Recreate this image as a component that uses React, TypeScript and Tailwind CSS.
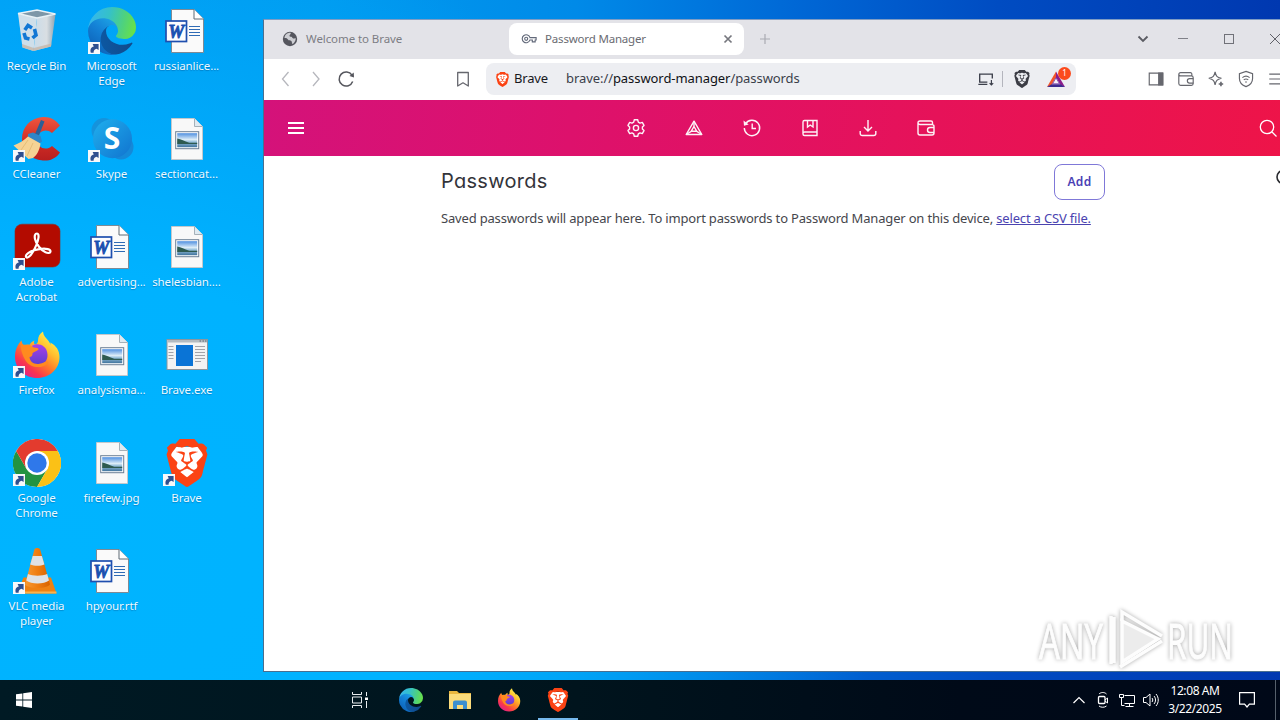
import type { ReactNode } from "react";
import { SiBrave } from "react-icons/si";

type DesktopEntry = {
  id: string;
  lines: string[];
  icon: ReactNode;
  shortcut?: boolean;
};

function ShortcutArrow() {
  return (
    <svg viewBox="0 0 12 12" className="absolute bottom-[1px] left-0 size-3">
      <rect width="12" height="12" fill="#f7f8fa" />
      <path d="M2.800 10.800C1.800 7 3.200 4.800 5.800 4.400L4.600 2h6v6L8.600 6.700C6.800 7 5.400 8.200 5.600 10.800z" fill="#2f4f8f" />
    </svg>
  );
}

function RecycleBinIcon() {
  return (
    <svg viewBox="0 0 48 48" className="size-12">
      <defs>
        <linearGradient id="bin" x1="0" x2="1">
          <stop offset="0" stopColor="#c9dcea" />
          <stop offset="0.6" stopColor="#d9dee2" />
          <stop offset="1" stopColor="#8fa3b1" />
        </linearGradient>
      </defs>
      <path d="M5 6.500 24 11 20.500 44 9.500 40.500z" fill="#cfdfea" />
      <path d="M24 11 42.500 7 38 39.500 20.500 44z" fill="url(#bin)" />
      <path d="M9 37 20.800 41 38.400 36.500 38 39.500 20.500 44 9.500 40.500z" fill="#c7b6a8" opacity=".8" />
      <path d="M5 6.500 24 3l18.500 4L24 11z" fill="#7d97a8" stroke="#e8f1f6" strokeWidth="1.3" />
      <g fill="none" stroke="#1277d4" strokeWidth="3.6">
        <path d="m11.800 23 3.200-4.500 4 2.500" />
        <path d="m21.500 22 1.500 6-3.500 3" />
        <path d="m16.500 32-4-1-1.500-5" />
      </g>
    </svg>
  );
}

function EdgeIcon({ className }: { className: string }) {
  return (
    <svg viewBox="0 0 256 256" className={className}>
      <defs>
        <linearGradient id="edge-a" x1="60" x2="240" y1="180" y2="180" gradientUnits="userSpaceOnUse">
          <stop offset="0" stopColor="#0c59a4" />
          <stop offset="1" stopColor="#114a8b" />
        </linearGradient>
        <linearGradient id="edge-b" x1="150" x2="40" y1="100" y2="240" gradientUnits="userSpaceOnUse">
          <stop offset="0" stopColor="#1b9de2" />
          <stop offset="0.4" stopColor="#1481d6" />
          <stop offset="1" stopColor="#0d62b8" />
        </linearGradient>
        <linearGradient id="edge-c" x1="10" x2="250" y1="60" y2="120" gradientUnits="userSpaceOnUse">
          <stop offset="0" stopColor="#35b6ee" />
          <stop offset="0.4" stopColor="#35c1c9" />
          <stop offset="0.75" stopColor="#4fd27c" />
          <stop offset="1" stopColor="#67e04b" />
        </linearGradient>
      </defs>
      <g transform="translate(-4.63 -4.92)">
        <path
          fill="url(#edge-a)"
          d="M235.680 195.460a93.730 93.730 0 0 1-10.540 4.710 101.870 101.870 0 0 1-35.900 6.460c-47.320 0-88.540-32.550-88.540-74.320A31.480 31.480 0 0 1 117.130 105c-42.800 1.800-53.800 46.400-53.800 72.530 0 73.880 68.090 81.370 82.760 81.370 7.910 0 19.840-2.300 27-4.560l1.310-.44a128.340 128.340 0 0 0 66.600-52.800 4 4 0 0 0-5.320-5.640z"
        />
        <path
          fill="url(#edge-b)"
          d="M110.340 246.340A79.200 79.200 0 0 1 87.600 225a80.720 80.720 0 0 1 29.530-120c3.120-1.470 8.450-4.130 15.540-4a32.350 32.350 0 0 1 25.690 13 31.880 31.880 0 0 1 6.360 18.660c0-.21 24.460-79.600-80-79.600-43.900 0-80 41.660-80 78.210a130.150 130.150 0 0 0 12.110 56 128 128 0 0 0 156.380 67.110 75.550 75.550 0 0 1-62.780-8z"
        />
        <path
          fill="url(#edge-c)"
          d="M156.940 153.780c-.81 1.050-3.300 2.500-3.300 5.660 0 2.610 1.700 5.120 4.720 7.230 14.380 10 41.490 8.680 41.560 8.680a59.560 59.560 0 0 0 30.270-8.350 61.380 61.380 0 0 0 30.430-52.880c.26-22.410-8-37.310-11.340-43.910C228.090 28.760 182.350 4.920 132.610 4.920a128 128 0 0 0-128 126.200c.48-36.540 36.800-66.050 80-66.050 3.500 0 23.460.34 42 10.070 16.340 8.580 24.900 18.940 30.850 29.210 6.180 10.670 7.280 24.150 7.280 29.520s-2.740 13.330-7.800 19.910z"
        />
      </g>
    </svg>
  );
}

function WordDocIcon() {
  return (
    <svg viewBox="0 0 48 48" className="size-12">
      <path d="M8.500 2.500h22.500l9.500 9.500v33.500h-32z" fill="#fafafa" stroke="#7f8a94" />
      <path d="M31 2.500V12h9.500" fill="#fff" stroke="#5f6a74" />
      <path d="M26 19.500h11M26 22.500h11M26 25.500h11M26 28.500h11" stroke="#2f6bb5" />
      <rect x="3" y="14" width="20.500" height="20.500" fill="#fdfdff" stroke="#1f4fae" strokeWidth="1.7" />
      <text
        x="13.2"
        y="30.5"
        textAnchor="middle"
        fontFamily="Liberation Serif, serif"
        fontSize="18"
        fontWeight="bold"
        fontStyle="italic"
        fill="#1b50b0"
        stroke="#1b50b0"
        strokeWidth="0.8"
      >
        W
      </text>
    </svg>
  );
}

function ImageFileIcon() {
  return (
    <svg viewBox="0 0 48 48" className="size-12">
      <defs>
        <linearGradient id="photo" x1="0" x2="0" y1="0" y2="1">
          <stop offset="0" stopColor="#4f8fe0" />
          <stop offset="0.45" stopColor="#dcecf7" />
          <stop offset="0.6" stopColor="#9cc3dd" />
          <stop offset="1" stopColor="#3f739d" />
        </linearGradient>
      </defs>
      <path d="M8.500 3.500h23l8 8v33h-31z" fill="#f8f8f8" stroke="#c3c8cc" />
      <path d="M31.500 3.500v8h8" fill="#dfeaf1" stroke="#a5b0b8" />
      <rect x="12.700" y="16.700" width="23" height="17" fill="#fff" stroke="#6b7f95" />
      <rect x="14.200" y="18.200" width="20" height="14" fill="url(#photo)" />
      <path d="M14.200 23.500c4 .5 7 2.500 12 4.200h8v1.300h-20z" fill="#2e5a50" />
    </svg>
  );
}

function CCleanerIcon() {
  return (
    <svg viewBox="0 0 48 48" className="size-12">
      <defs>
        <linearGradient id="cc" x1="0" x2="0" y1="0" y2="1">
          <stop offset="0" stopColor="#f0563f" />
          <stop offset="0.5" stopColor="#d22f26" />
          <stop offset="1" stopColor="#b81f1f" />
        </linearGradient>
      </defs>
      <path
        d="M47 10.500 39 18c-6-5.500-15-1.500-15 6.500s8.500 12 15 6.500L47 37.500C42 44.500 36 46 30 45.500 16.500 44.500 9 35.500 9 24S17 3 30 2c7-.4 13 3 17 8.500z"
        fill="url(#cc)"
      />
      <path d="m28 5 3.500 1.500L24.500 24l-4-1.500z" fill="#2c5f96" />
      <path d="m15 19 5-1.500 7.500 3.500 1.500 5.500-3 2-11-6z" fill="#2f86c9" />
      <path d="M15 21.500c-4 4-9 7-14.500 9L15.500 44l4.500-1c4-3 6.500-7.500 7.500-14.500z" fill="#f5d394" />
      <path d="M15 25 8 35m12-7-6 13" stroke="#e6bd77" fill="none" />
    </svg>
  );
}

function SkypeIcon() {
  return (
    <svg viewBox="0 0 48 48" className="size-12">
      <defs>
        <linearGradient id="skype" x1="0" x2="1" y1="0" y2="1">
          <stop offset="0" stopColor="#1fb0ee" />
          <stop offset="1" stopColor="#1173cf" />
        </linearGradient>
      </defs>
      <circle cx="16" cy="15.500" r="12.500" fill="#1593dc" />
      <circle cx="33" cy="32" r="12.500" fill="#1589d8" />
      <circle cx="24.500" cy="23.700" r="19.500" fill="url(#skype)" />
      <text
        x="24"
        y="34"
        textAnchor="middle"
        fontFamily="Open Sans, sans-serif"
        fontSize="30"
        fontWeight="bold"
        fill="#fff"
      >
        S
      </text>
    </svg>
  );
}

function AcrobatIcon() {
  return (
    <svg viewBox="0 0 48 48" className="size-12">
      <rect x="2" y="1.200" width="45" height="42.800" rx="7" fill="#b30b00" stroke="#8f2a20" strokeWidth=".6" />
      <path
        d="M24 10.500c-2.200 0-2.600 2.600-2 5.500 1 5 6 11.200 10.500 13.300 2.500 1.100 5 .9 5-.9 0-2.300-4.500-2.900-8.500-2.600-5 .4-10 1.700-13.500 4-2 1.300-3.200 3.100-2.300 4.300 1.200 1.500 4.200-1 6.300-4.600 2.800-4.700 5.500-10.500 6-15 .2-2.300-.2-4-1.500-4z"
        fill="none"
        stroke="#fff"
        strokeWidth="2.2"
      />
    </svg>
  );
}

function FirefoxIcon({ className }: { className: string }) {
  return (
    <svg viewBox="0 0 48 48" className={className}>
      <defs>
        <linearGradient id="ff-a" x1="0.85" x2="0.2" y1="0.1" y2="0.95">
          <stop offset="0" stopColor="#fff34d" />
          <stop offset="0.3" stopColor="#ffbd2e" />
          <stop offset="0.55" stopColor="#ff7a2a" />
          <stop offset="0.8" stopColor="#f9354f" />
          <stop offset="1" stopColor="#e0228a" />
        </linearGradient>
        <linearGradient id="ff-b" x1="0" x2="0" y1="0" y2="1">
          <stop offset="0" stopColor="#a83fe8" />
          <stop offset="1" stopColor="#5b3fd0" />
        </linearGradient>
      </defs>
      <path
        d="M8.500 9.500c.3 2 .8 3.200 2 4.500 2-.6 4-.7 6-.3 1.500-2.200 3-3.400 5-4.200-.7 1.500-.6 2.700 0 3.800 2.500 0 3.500-1.500 3.500-4 0-3.700 1.800-6.500 5-8.800.3 4 2.500 6 4.500 8.200 1.600 1.800 2.500 3.200 3 5.300 0-1 0-1.700-.2-2.600C43 14.500 46.500 19 46.500 26c0 12.200-10 21-22.300 21S2 37.800 2 26c0-7 2.500-12.500 6.500-16.500z"
        fill="url(#ff-a)"
      />
      <path d="M19 15c4-3.500 15-2 15.500 8.500.3 7-4.500 10.500-10 10.500S15 31 14.500 26c2-4 5-4 7-6z" fill="url(#ff-b)" />
      <path
        d="M7.500 12c2 2.500 5 1.700 9 2 1.500.7 3 2.200 4.500 2.600 3 .4 4.500.5 4.500 1.500-.2 1.900-5 2.600-6 4.200.3 2.200-1 3.700-3 3.700.5 5.200 5 7.700 10 6.800 3.500-.6 5-2.300 7.500-2.300 1.500 0 1.700 1.600.5 2.500-6 4.600-17 4.600-22-3.500-3.500-5.700-5-11.500-5-17.500z"
        fill="#ff8a1f"
      />
    </svg>
  );
}

function ChromeIcon() {
  return (
    <svg viewBox="0 0 48 48" className="size-12">
      <circle cx="24" cy="24" r="24" fill="#fff" />
      <path d="M3.200 12A24 24 0 0 0 24 48l10.400-18L24 34.500 13.600 30z" fill="#229342" />
      <path d="M44.800 12A24 24 0 0 1 24 48l10.400-18L36 24l-4-9-8-3z" fill="#fbc116" />
      <path d="M3.200 12A24 24 0 0 1 44.800 12H24L13.600 30z" fill="#e33b2e" />
      <circle cx="24" cy="24" r="12" fill="#fff" />
      <circle cx="24" cy="24" r="9.700" fill="#2f78ea" />
    </svg>
  );
}

function VlcIcon() {
  return (
    <svg viewBox="0 0 48 48" className="size-12">
      <defs>
        <linearGradient id="cone" x1="0" x2="1">
          <stop offset="0" stopColor="#f79a33" />
          <stop offset="0.5" stopColor="#ef7d10" />
          <stop offset="1" stopColor="#d76300" />
        </linearGradient>
      </defs>
      <path d="M10.500 30.500h27.500l5.500 16H4z" fill="#ef8112" />
      <path d="M4 44.500h39.500v2H4z" fill="#fbb34d" />
      <path d="M21.500 2c1-1.500 4.500-1.500 5.500 0l10 35.500C34 42 15 42 12 37.500z" fill="url(#cone)" />
      <path d="M19.700 9h9.200l2.500 8.500c-4 1.800-10 1.800-14.200 0z" fill="#dfe2e5" />
      <path d="M15 27c5 2.300 14 2.300 19.200 0l1.800 6.500c-5 4-18 4-22.700 0z" fill="#dfe2e5" />
    </svg>
  );
}

function BraveExeIcon() {
  return (
    <svg viewBox="0 0 48 48" className="size-12">
      <rect x="4" y="8.500" width="40.500" height="30" fill="#f3f3f3" stroke="#8c969e" />
      <rect x="4.500" y="9" width="39.500" height="2.500" fill="#b4bbc1" />
      <path d="M36.500 10h1.500m1.500 0h1.500m1 0h1.500" stroke="#5f6972" />
      <rect x="13" y="14" width="17" height="21" fill="#0a74d6" />
      <path
        d="M5.500 15.500h5M5.500 18.500h5M5.500 21.500h5M5.500 24.500h5M5.500 27.500h5M32 15.500h10M32 18.500h10M32 21.500h10M32 24.500h10M32 27.500h10M32 30.500h6"
        stroke="#a3a3a9"
      />
    </svg>
  );
}

function BraveShield({ size }: { size: number }) {
  return (
    <span className="relative inline-flex items-center justify-center text-[#fb4314]">
      <svg viewBox="0 0 24 24" width={size} height={size} className="absolute">
        <path d="M5 4h14l2 4-4 11-5 4-5-4L3 8z" fill="#fff" />
      </svg>
      <SiBrave size={size} className="relative" />
    </span>
  );
}

const DESKTOP: DesktopEntry[] = [
  { id: "bin", lines: ["Recycle Bin"], icon: <RecycleBinIcon /> },
  { id: "cc", lines: ["CCleaner"], icon: <CCleanerIcon />, shortcut: true },
  { id: "acrobat", lines: ["Adobe", "Acrobat"], icon: <AcrobatIcon />, shortcut: true },
  { id: "firefox", lines: ["Firefox"], icon: <FirefoxIcon className="size-12" />, shortcut: true },
  { id: "chrome", lines: ["Google", "Chrome"], icon: <ChromeIcon />, shortcut: true },
  { id: "vlc", lines: ["VLC media", "player"], icon: <VlcIcon />, shortcut: true },
  { id: "edge", lines: ["Microsoft", "Edge"], icon: <EdgeIcon className="size-12" />, shortcut: true },
  { id: "skype", lines: ["Skype"], icon: <SkypeIcon />, shortcut: true },
  { id: "advertising", lines: ["advertising..."], icon: <WordDocIcon /> },
  { id: "analysisma", lines: ["analysisma..."], icon: <ImageFileIcon /> },
  { id: "firefew", lines: ["firefew.jpg"], icon: <ImageFileIcon /> },
  { id: "hpyour", lines: ["hpyour.rtf"], icon: <WordDocIcon /> },
  { id: "russianlice", lines: ["russianlice..."], icon: <WordDocIcon /> },
  { id: "sectioncat", lines: ["sectioncat..."], icon: <ImageFileIcon /> },
  { id: "shelesbian", lines: ["shelesbian...."], icon: <ImageFileIcon /> },
  { id: "braveexe", lines: ["Brave.exe"], icon: <BraveExeIcon /> },
  { id: "brave", lines: ["Brave"], icon: <BraveShield size={48} />, shortcut: true },
];

function DesktopIcons() {
  return (
    <div className="grid w-[263px] shrink-0 auto-cols-[75px] grid-flow-col grid-rows-[repeat(6,108px)] content-start">
      {DESKTOP.map((d) => (
        <div key={d.id} className="flex flex-col pt-[7px]">
          <div className="relative ml-[13px] size-12">
            {d.icon}
            {d.shortcut && <ShortcutArrow />}
          </div>
          <div className="mt-[3px] w-[73px] text-center text-[11.5px] leading-[15px] tracking-[-0.1px] whitespace-nowrap text-white/95 [text-shadow:0_1px_1px_rgba(0,40,90,0.3)]">
            {d.lines.map((line) => (
              <div key={line}>{line}</div>
            ))}
          </div>
        </div>
      ))}
    </div>
  );
}

type GlyphProps = { children: ReactNode; className?: string; size?: number };

function Glyph({ children, className, size = 20 }: GlyphProps) {
  return (
    <svg
      viewBox="0 0 20 20"
      width={size}
      height={size}
      fill="none"
      stroke="currentColor"
      strokeWidth="1.3"
      className={className}
    >
      {children}
    </svg>
  );
}

function WalletGlyph() {
  return (
    <>
      <path d="M16.500 6.500v-2a1.500 1.500 0 0 0-1.500-1.500H4a2 2 0 0 0-2 2v10a2 2 0 0 0 2 2h12a2 2 0 0 0 2-2V8.500a2 2 0 0 0-2-2H4a2 2 0 0 1-2-1.500" />
      <path d="M18 9.500h-4a2.500 2.500 0 0 0 0 5h4" />
    </>
  );
}

function TabStrip() {
  return (
    <div className="flex h-[39px] items-center bg-[#e3e3e8] pb-[2px] text-[#6a6b72]">
      <div className="flex h-8 w-[245px] items-center gap-2 pl-[18px] text-[11.5px]">
        <svg viewBox="0 0 16 16" className="size-4">
          <circle cx="8" cy="8" r="7.200" fill="#55565e" />
          <path
            d="M8.500 1.800c1 1-.5 1.700-1 2.700-.5.900.8 1.300 1.800 1.300s.7 1.500 1.900 1.600c1.200 0 1.800-.6 2.600 0-.2 2.500-1.500 4.600-3.300 5.600-1-.6-.2-2.300-1.200-3-1-.8-2.800-.2-3.300-1.500-.6-1.300-2-1.800-3.500-1.500C2.600 4 5 1.700 8.500 1.800z"
            fill="#e3e3e8"
            opacity=".85"
          />
        </svg>
        <span className="tracking-[-0.08px] text-[#7c7d84]">Welcome to Brave</span>
      </div>
      <div className="flex h-8 w-[235px] items-center rounded-[8px] bg-white pl-3 text-[11.5px]">
        <svg viewBox="0 0 18 12" className="h-3 w-[17px]" fill="none" stroke="#62697a" strokeWidth="1.2">
          <path d="M9.500 4.500h6.500v2.500h-1v2h-3v-2H9.500A4.200 4.200 0 1 1 9.500 4.500z" />
          <circle cx="5.500" cy="5.800" r="1.600" />
        </svg>
        <span className="ml-[7px] tracking-[-0.18px]">Password Manager</span>
        <svg viewBox="0 0 10 10" className="mr-[11px] ml-auto size-[10px]" stroke="#76777e" strokeWidth="1.7">
          <path d="m1.500 1.500 7 7m0-7-7 7" />
        </svg>
      </div>
      <svg viewBox="0 0 10 10" className="ml-4 size-[10px]" stroke="#aaabb2" strokeWidth="1.2">
        <path d="M5 0v10M0 5h10" />
      </svg>
      <div className="ml-[367px] flex items-center">
        <svg viewBox="0 0 12 8" className="h-2 w-3" fill="none" stroke="#5a5b62" strokeWidth="1.8">
          <path d="m1.500 1.500 4.500 4.500 4.500-4.500" />
        </svg>
        <div className="ml-[29px] h-px w-[10px] bg-[#808188]" />
        <div className="ml-[36px] size-[10px] border border-[#707178]" />
        <svg viewBox="0 0 10 10" className="ml-[36px] size-[10px]" stroke="#606168">
          <path d="m0 0 10 10M10 0 0 10" />
        </svg>
      </div>
    </div>
  );
}

function ToolButton({ children }: { children: ReactNode }) {
  return <div className="flex w-[30px] shrink-0 items-center justify-center">{children}</div>;
}

function Toolbar() {
  return (
    <div className="flex h-[41px] items-stretch bg-white pt-[4px] pb-[5px] pl-[7px] text-[#66676e]">
      <ToolButton>
        <Glyph className="text-[#b6b7bd]">
          <path d="m12.500 3-6 7 6 7" />
        </Glyph>
      </ToolButton>
      <ToolButton>
        <Glyph className="text-[#b6b7bd]">
          <path d="m7 3 6 7-6 7" />
        </Glyph>
      </ToolButton>
      <ToolButton>
        <Glyph className="text-[#55565d]">
          <path strokeWidth="1.5" d="M16.700 12.500A7 7 0 1 1 16 6.200" />
          <path d="m17.700 3.500.3 5-4.500-1.500z" fill="currentColor" stroke="none" />
        </Glyph>
      </ToolButton>
      <div className="w-[87px] shrink-0" />
      <ToolButton>
        <Glyph>
          <path strokeWidth="1.3" d="M4.700 3.500h10.600v13.500L10 13.800 4.700 17z" strokeLinejoin="round" />
        </Glyph>
      </ToolButton>
      <div className="ml-2 flex w-[590px] shrink-0 items-center rounded-[8px] bg-[#edeef2] pl-2 text-[13px] text-[#3b3e4a]">
        <span className="flex size-4 items-center justify-center">
          <BraveShield size={15} />
        </span>
        <span className="ml-[4px] w-[52px] tracking-[-0.2px] whitespace-nowrap text-[#17181d]">Brave</span>
        <span className="tracking-[-0.07px] whitespace-nowrap">
          brave://<span className="text-[#101116]">password-manager</span>/passwords
        </span>
        <div className="ml-auto flex items-center">
          <Glyph size={18} className="mr-px text-[#3b3e4a]">
            <path strokeWidth="1.5" d="M11.500 13.500H3V4.500h14v5M1.500 16h10" />
            <path strokeWidth="1.3" d="M16 11v5.500m-2-2 2 2 2-2" />
          </Glyph>
          <div className="ml-[6px] h-4 w-px bg-[#b4b5bd]" />
          <SiBrave size={18} className="ml-[10px] text-[#3b3c44]" />
          <div className="relative mr-[11px] ml-4">
            <svg viewBox="0 0 18 17" className="h-[17px] w-[18px]">
              <path d="M9 .5 0 16l4.500-2L9 6.200z" fill="#f2552c" />
              <path d="M9 .5 18 16l-4.500-2L9 6.200z" fill="#8c1d8c" />
              <path d="M0 16h18l-4.500-2.800h-9z" fill="#3d2a8f" />
              <path d="M9 6.800 5.500 12.800h7z" fill="#f6f0f6" stroke="#6c2aa0" strokeWidth=".8" />
            </svg>
            <span className="absolute top-[-4px] right-[-6px] flex size-[13px] items-center justify-center rounded-full bg-[#fb4a1c] text-[8px] leading-none text-white">
              1
            </span>
          </div>
        </div>
      </div>
      <div className="w-[65px] shrink-0" />
      <ToolButton>
        <Glyph size={18}>
          <path d="M2.500 3.500h15v13h-15z" />
          <path d="M13 3.500h4.500v13H13z" fill="currentColor" />
        </Glyph>
      </ToolButton>
      <ToolButton>
        <Glyph size={18}>
          <WalletGlyph />
        </Glyph>
      </ToolButton>
      <ToolButton>
        <Glyph size={18}>
          <path d="M9 2c1 5 2 6 7 7.200-5 1.300-6 2.300-7 7.300-1-5-2-6-7-7.300C7 8 8 7 9 2z" />
          <path d="M15.500 13v5M13 15.500h5" strokeWidth="1.8" />
        </Glyph>
      </ToolButton>
      <ToolButton>
        <Glyph size={18}>
          <path d="m10 1.500 7.300 2.700v5.300c0 4.500-3 7.500-7.300 9-4.300-1.500-7.300-4.500-7.300-9V4.200z" />
          <path d="M6 8.500c2.500-2 5.500-2 8 0M7.500 11c1.500-1.200 3.500-1.200 5 0M9 13.300h2" />
        </Glyph>
      </ToolButton>
      <ToolButton>
        <Glyph size={18}>
          <path d="M2.500 4.500h14M2.500 10h14M2.500 15.500h14" />
        </Glyph>
      </ToolButton>
    </div>
  );
}

const NAV_GLYPHS: { id: string; glyph: ReactNode }[] = [
  {
    id: "settings",
    glyph: (
      <>
        <path
          strokeLinejoin="round"
          d="M8.300 1.800h3.400l.6 2.300 1.700 1 2.300-.7 1.700 3-1.600 1.600v2l1.600 1.600-1.700 3-2.300-.7-1.700 1-.6 2.300H8.300l-.6-2.300-1.700-1-2.300.7-1.700-3L3.600 11V9L2 7.400l1.700-3 2.300.7 1.700-1z"
        />
        <circle cx="10" cy="10" r="2.600" />
      </>
    ),
  },
  {
    id: "rewards",
    glyph: (
      <>
        <path d="m10 3.200 7.800 13.300H2.200z" strokeLinejoin="round" />
        <path d="m10 8.500 2.800 4.800H7.200zM10 3.200v5.300M2.200 16.500l5-3.200m10.600 3.200-5-3.200" />
      </>
    ),
  },
  {
    id: "history",
    glyph: (
      <>
        <path d="M3.500 5.800A7.700 7.700 0 1 1 2.300 10" />
        <path d="M10.200 5.500v5h3.800" />
        <path d="m1.500 2.500.5 5.200 4.700-1.200z" fill="currentColor" stroke="none" />
      </>
    ),
  },
  {
    id: "bookmarks",
    glyph: (
      <>
        <path d="M17 14V2.500H4.500a1.500 1.500 0 0 0-1.500 1.500v12a1.500 1.500 0 0 0 1.500 1.500H17V14H4.500A1.500 1.500 0 0 0 3 15.500" />
        <path d="M7.500 2.500V9l2.700-2L13 9V2.500" />
      </>
    ),
  },
  {
    id: "downloads",
    glyph: (
      <>
        <path d="M10 2v11m-4-4 4 4 4-4" />
        <path d="M2.200 13v2.500a2 2 0 0 0 2 2h11.600a2 2 0 0 0 2-2V13" />
      </>
    ),
  },
  { id: "wallet", glyph: <WalletGlyph /> },
];

function HeaderBar() {
  return (
    <div className="flex h-14 items-center bg-[linear-gradient(98deg,#d4127a_0%,#dd116c_30%,#e61259_65%,#ee1448_100%)] text-white">
      <div className="ml-6 flex w-4 flex-col gap-[3px]">
        <div className="h-[2px] bg-white" />
        <div className="h-[2px] bg-white" />
        <div className="h-[2px] bg-white" />
      </div>
      <div className="ml-[322px] flex gap-[38px]">
        {NAV_GLYPHS.map((n) => (
          <Glyph key={n.id} className="opacity-95 [stroke-width:1.4]">
            {n.glyph}
          </Glyph>
        ))}
      </div>
      <Glyph className="ml-[322px]">
        <circle cx="9" cy="9" r="6.700" />
        <path d="m14 14 4.500 4.500" />
      </Glyph>
    </div>
  );
}

function PasswordsPage() {
  return (
    <div className="flex flex-1 bg-white pl-[177px] text-[#45464c]">
      <div className="w-[664px] shrink-0 pt-2">
        <div className="flex h-9 items-center justify-between">
          <h1 className="pb-[3px] font-[Inter,sans-serif] text-[20px] tracking-[0.3px] text-[#33343a] [font-feature-settings:'cv11']">
            Passwords
          </h1>
          <button className="h-9 w-[51px] rounded-[8px] border border-[#7f78d8] text-[12px] font-semibold tracking-[0.3px] text-[#4a3fb5]">
            Add
          </button>
        </div>
        <p className="mt-[9px] text-[13px] leading-[18px] tracking-[-0.177px] whitespace-nowrap">
          Saved passwords will appear here. To import passwords to Password Manager on this device,{" "}
          <a className="text-[#4a43b0] underline">select a CSV file.</a>
        </p>
      </div>
      <svg viewBox="0 0 16 16" className="mt-[13px] ml-[170px] size-4 shrink-0" fill="none" stroke="#2a2b30" strokeWidth="1.6">
        <circle cx="8.500" cy="8" r="6.500" />
      </svg>
    </div>
  );
}

function BrowserWindow() {
  return (
    <div className="mt-[19px] flex h-[653px] w-[1017px] shrink-0 flex-col overflow-hidden border-y border-l border-[#4a6f8f] border-t-[#7f9cc4]">
      <div className="flex w-[1030px] flex-1 flex-col">
        <TabStrip />
        <Toolbar />
        <HeaderBar />
        <PasswordsPage />
      </div>
    </div>
  );
}

function Watermark() {
  return (
    <svg
      viewBox="0 0 200 66"
      className="absolute top-[607px] left-[1036px] h-[66px] w-[200px] overflow-visible drop-shadow-[0_0_2px_rgba(0,0,0,0.35)]"
      fill="#fdfdfd"
      stroke="#fdfdfd"
      fontFamily="Open Sans, sans-serif"
      fontSize="50"
    >
      <text x="3" y="52" textLength="64" lengthAdjust="spacingAndGlyphs">
        ANY
      </text>
      <text x="131" y="52" textLength="66" lengthAdjust="spacingAndGlyphs">
        RUN
      </text>
      <g fill="none" strokeWidth="3.5">
        <path d="M86 14v41l36-23z" fill="#ececec" />
        <path d="M75 57V9m3 47V10M86 14V5l40 24M84 60l42-26" />
      </g>
    </svg>
  );
}

function TaskbarSlot({ children }: { children: ReactNode }) {
  return <div className="relative flex w-[49px] items-center justify-center">{children}</div>;
}

function Taskbar() {
  return (
    <div className="flex h-10 items-stretch bg-[linear-gradient(90deg,#001a24_0%,#00141d_45%,#000a18_75%,#000818_100%)] text-white">
      <div className="flex w-12 items-center justify-center">
        <svg viewBox="0 0 16 16" className="size-4" fill="#fff">
          <path d="M0 2.300 6.400 1.400v6.200H0zM7.200 1.300 16 0v7.600H7.200zM0 8.400h6.400v6.200L0 13.700zM7.200 8.400H16V16l-8.800-1.300z" />
        </svg>
      </div>
      <div className="ml-[287px] flex w-[51px] items-center justify-center pr-[2px]">
        <svg viewBox="0 0 18 16" className="h-4 w-[18px]" fill="none" stroke="#e8edf0">
          <path d="M1.500 0v2.500h9V0M1.500 16v-2.500h9V16M1.500 5h9v6h-9zM15.500 0v4M15.500 9v7" />
          <path d="M14 5.500h3v2.500h-3z" fill="#fff" stroke="none" />
        </svg>
      </div>
      <TaskbarSlot>
        <EdgeIcon className="size-6" />
      </TaskbarSlot>
      <TaskbarSlot>
        <svg viewBox="0 0 22 20" className="h-5 w-[22px]">
          <path d="M0 1h8l2 2h12v16H0z" fill="#e9b73f" />
          <path d="M0 4h22v15H0z" fill="#fbdc7b" />
          <path d="M4 12.500a2 2 0 0 1 2-2h10a2 2 0 0 1 2 2V19h-4v-4H8v4H4z" fill="#3b8fd0" />
        </svg>
      </TaskbarSlot>
      <TaskbarSlot>
        <FirefoxIcon className="size-6" />
      </TaskbarSlot>
      <TaskbarSlot>
        <BraveShield size={24} />
        <div className="absolute bottom-0 left-[5px] h-[2px] w-10 bg-[#76b9ed]" />
      </TaskbarSlot>
      <div className="ml-[485px] flex items-center">
        <div className="flex w-6 justify-center">
          <svg viewBox="0 0 12 8" className="h-2 w-3" fill="none" stroke="#fff" strokeWidth="1.2">
            <path d="m.5 7 5.500-5.500L11.500 7" />
          </svg>
        </div>
        <div className="flex w-6 justify-center">
          <svg viewBox="0 0 16 16" className="size-4" fill="none" stroke="#fff">
            <rect x="3.500" y="4.500" width="6.500" height="7" rx="1" strokeWidth="1.3" />
            <path d="m10 8 2.500-2v5L10 9M4 2C6 0 9.500 0 11.500 2M4 14c2 1.700 5.500 1.700 7.500 0" />
          </svg>
        </div>
        <div className="flex w-6 justify-center">
          <svg viewBox="0 0 16 16" className="size-4" fill="none" stroke="#fff">
            <path d="M5.500 3.500h10v8h-10M10.500 11.500v3M6.500 14.500h8M.5 2.500h4v3h-4zM2.500 5.500v8h3" />
          </svg>
        </div>
        <div className="flex w-6 justify-center">
          <svg viewBox="0 0 16 16" className="size-4" fill="none" stroke="#fff">
            <path d="M.5 5.500h2.500l4-3.500v12L3 10.500H.5zM9 6c1 1.200 1 2.800 0 4M11 4c2 2.300 2 5.700 0 8M13 2c3 3.500 3 8.500 0 12" />
          </svg>
        </div>
      </div>
      <div className="flex w-16 flex-col items-center justify-center text-[12px] leading-[18px] tracking-[-0.4px] whitespace-nowrap">
        <span>12:08 AM</span>
        <span>3/22/2025</span>
      </div>
      <div className="flex w-10 items-center justify-center">
        <svg viewBox="0 0 16 16" className="size-4" fill="none" stroke="#fff" strokeWidth="1.2">
          <path d="M.6.600h14.800v11.500h-5L8 15l-2.400-2.900h-5z" />
        </svg>
      </div>
      <div className="ml-2 w-px bg-[#56606c]" />
    </div>
  );
}

export default function App() {
  return (
    <div className="relative flex h-[720px] w-[1280px] flex-col overflow-hidden bg-[radial-gradient(ellipse_820px_640px_at_60px_560px,#00b4ff_0%,#00b2ff_45%,transparent_100%),linear-gradient(90deg,#009ff5_0%,#009bf0_25%,#008ae8_45%,#0068d6_62%,#004cc2_78%,#0038b0_100%)] font-['Noto_Sans',sans-serif]">
      <div className="flex h-[680px]">
        <DesktopIcons />
        <BrowserWindow />
      </div>
      <Taskbar />
      <Watermark />
    </div>
  );
}
